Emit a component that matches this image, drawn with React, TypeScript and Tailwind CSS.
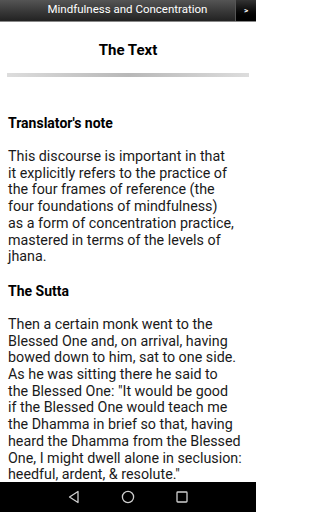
const sections = [
  {
    title: "Translator's note",
    lines: [
      'This discourse is important in that',
      'it explicitly refers to the practice of',
      'the four frames of reference (the',
      'four foundations of mindfulness)',
      'as a form of concentration practice,',
      'mastered in terms of the levels of',
      'jhana.',
    ],
  },
  {
    title: 'The Sutta',
    lines: [
      'Then a certain monk went to the',
      'Blessed One and, on arrival, having',
      'bowed down to him, sat to one side.',
      'As he was sitting there he said to',
      'the Blessed One: "It would be good',
      'if the Blessed One would teach me',
      'the Dhamma in brief so that, having',
      'heard the Dhamma from the Blessed',
      'One, I might dwell alone in seclusion:',
      'heedful, ardent, & resolute."',
    ],
  },
];

export default function App() {
  return (
    <div className="h-[512px] w-[256px] flex flex-col bg-white overflow-hidden font-['Roboto',sans-serif]">
      <div className="h-[22px] shrink-0 flex items-center bg-gradient-to-b from-[#555555] to-[#222222] border-b border-[#888888]">
        <div className="flex-1 text-center text-white text-[11.5px] leading-none pl-[20px] pb-[1px]">
          Mindfulness and Concentration
        </div>
        <button className="h-[21px] w-[21px] flex items-center justify-center bg-gradient-to-b from-[#333333] to-[#000000] border-l border-[#555555] text-white text-[8px] font-bold">
          &gt;
        </button>
      </div>

      <div className="flex-1 overflow-hidden">
        <h1 className="text-center text-[15px] font-bold text-black pt-[19px] leading-[18px]">The Text</h1>
        <div className="mx-[7px] mt-[14px] h-[4px] bg-gradient-to-r from-[#dddddd] via-[#b8b8b8] to-[#dddddd]" />

        <div className="px-[8px] pt-[29px] text-[#1a1a1a]">
          {sections.map((s) => (
            <div key={s.title}>
              <h2 className="text-[14px] font-bold text-black leading-[17px] mt-[9px] mb-[16px]">{s.title}</h2>
              <p className="text-[14.3px] leading-[16.7px] mb-[18px] whitespace-nowrap">
                {s.lines.map((l, i) => (
                  <span key={i} className="block">{l}</span>
                ))}
              </p>
            </div>
          ))}
        </div>
      </div>

      <div className="h-[30px] shrink-0 bg-black flex items-center justify-center gap-[38px]">
        <svg width="16" height="16" viewBox="0 0 16 16" fill="none" stroke="#cfcfcf" strokeWidth="1.3">
          <path d="M12 2.5 L3.5 8 L12 13.5 Z" strokeLinejoin="round" />
        </svg>
        <svg width="16" height="16" viewBox="0 0 16 16" fill="none" stroke="#cfcfcf" strokeWidth="1.3">
          <circle cx="8" cy="8" r="5.6" />
        </svg>
        <svg width="16" height="16" viewBox="0 0 16 16" fill="none" stroke="#cfcfcf" strokeWidth="1.3">
          <rect x="3" y="3" width="10" height="10" rx="0.8" />
        </svg>
      </div>
    </div>
  );
}
